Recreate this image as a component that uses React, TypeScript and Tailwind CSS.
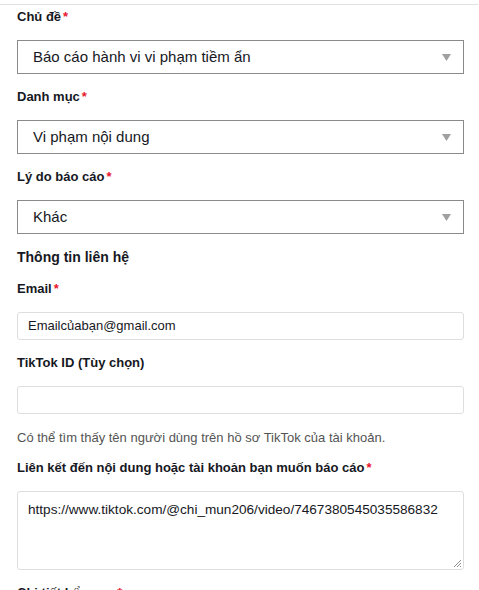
import type { ReactNode } from 'react'

const font = { fontFamily: '"Liberation Sans", Arial, sans-serif' }

function Label({ children, required }: { children: ReactNode; required?: boolean }) {
  return (
    <div className="h-5 flex items-center text-[13px] font-bold text-[#161823] leading-5">
      {children}
      {required && <span className="ml-[2px] text-[#e8152d]">*</span>}
    </div>
  )
}

function FakeSelect({ value }: { value: string }) {
  return (
    <div className="mt-[13px] h-[34px] w-[447px] border border-[#8a8a8a] bg-white flex items-center justify-between pl-[15px] pr-[12px]">
      <span className="text-[15px] text-[#161823]">{value}</span>
      {/* mũi tên dropdown */}
      <svg width="9" height="7" viewBox="0 0 9 7">
        <path d="M0 0 H9 L4.5 7 Z" fill="#a0a0a0" />
      </svg>
    </div>
  )
}

function TextInput({ value }: { value?: string }) {
  return (
    <div className="mt-[13px] h-[28px] w-[447px] border border-[#dedede] rounded-[3px] bg-white flex items-center px-[10px]">
      <span className="text-[13px] text-[#161823]">{value}</span>
    </div>
  )
}

export default function App() {
  return (
    <div className="min-h-screen bg-white" style={font}>
      <div className="mt-[4px] border-t border-[#e1e1e1] w-[478px] pl-[17px] pt-[2px] pb-6">
        <Label required>Chủ đề</Label>
        <FakeSelect value="Báo cáo hành vi vi phạm tiềm ẩn" />

        <div className="mt-[13px]">
          <Label required>Danh mục</Label>
        </div>
        <FakeSelect value="Vi phạm nội dung" />

        <div className="mt-[13px]">
          <Label required>Lý do báo cáo</Label>
        </div>
        <FakeSelect value="Khác" />

        <div className="mt-[13px] h-5 flex items-center text-[14px] font-bold text-[#161823]">
          Thông tin liên hệ
        </div>

        <div className="mt-[12px]">
          <Label required>Email</Label>
        </div>
        <TextInput value="Emailcủabạn@gmail.com" />

        <div className="mt-[13px]">
          <Label>TikTok ID (Tùy chọn)</Label>
        </div>
        <TextInput />

        <p className="mt-[14px] h-5 leading-5 text-[13px] text-[#545454]">
          Có thể tìm thấy tên người dùng trên hồ sơ TikTok của tài khoản.
        </p>

        <div className="mt-[10px]">
          <Label required>Liên kết đến nội dung hoặc tài khoản bạn muốn báo cáo</Label>
        </div>
        <div className="relative mt-[13px] h-[79px] w-[447px] border border-[#dedede] rounded-[3px] bg-white px-[10px] pt-[8px]">
          <div className="text-[13.6px] text-[#161823] leading-5">
            https://www.tiktok.com/@chi_mun206/video/7467380545035586832
          </div>
          {/* tay nắm đổi kích thước */}
          <svg className="absolute right-[2px] bottom-[2px]" width="8" height="8" viewBox="0 0 8 8">
            <path d="M8 1 L1 8 M8 4 L4 8 M8 7 L7 8" stroke="#8f8f8f" strokeWidth="1" />
          </svg>
        </div>

        <div className="mt-[13px]">
          <Label required>Chi tiết bổ sung</Label>
        </div>
      </div>
    </div>
  )
}
